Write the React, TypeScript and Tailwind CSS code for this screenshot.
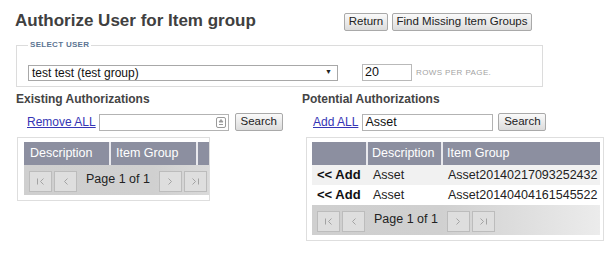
import React from 'react';

const font = { fontFamily: '"Liberation Sans", Arial, sans-serif' };

function Btn({ children, className = '' }: { children: React.ReactNode; className?: string }) {
  return (
    <button
      className={`h-[18px] px-0 whitespace-nowrap border border-[#a9a9a9] rounded-[2px] bg-gradient-to-b from-[#fafafa] to-[#dcdcdc] text-[11.5px] leading-none text-[#222] ${className}`}
    >
      {children}
    </button>
  );
}

function PagerIcon({ kind }: { kind: 'first' | 'prev' | 'next' | 'last' }) {
  return (
    <div className="w-[23px] h-[21px] border border-[#bcbcbc] bg-[#dedede] flex items-center justify-center">
      <svg width="10" height="9" viewBox="0 0 10 9" fill="none" stroke="#a3a3a3" strokeWidth="1">
        {kind === 'first' && <path d="M1.5 1.5v6M7.5 1.5L4.5 4.5l3 3" />}
        {kind === 'prev' && <path d="M6.5 1.5L3.5 4.5l3 3" />}
        {kind === 'next' && <path d="M3.5 1.5l3 3-3 3" />}
        {kind === 'last' && <path d="M2.5 1.5l3 3-3 3M8.5 1.5v6" />}
      </svg>
    </div>
  );
}

function Pager() {
  return (
    <div className="h-[30px] pt-[6px] pl-[5px] flex items-start bg-[linear-gradient(to_right,#cfcfcf_0px,#d0d0d0_130px,#ececec_290px)]">
      <PagerIcon kind="first" />
      <div className="ml-[2px]"><PagerIcon kind="prev" /></div>
      <span className="mx-[9px] mt-[1px] text-[12.5px] leading-[15px] text-[#222]">Page 1 of 1</span>
      <PagerIcon kind="next" />
      <div className="ml-[2px]"><PagerIcon kind="last" /></div>
    </div>
  );
}

export default function App() {
  return (
    <div className="w-[611px] h-[262px] bg-white text-[#333] overflow-hidden" style={font}>
      <div className="flex items-start pl-[15px] pt-[11px]">
        <h1 className="w-[329px] text-[17px] leading-[20px] font-bold text-[#404040]">Authorize User for Item group</h1>
        <div className="flex gap-[4px] mt-[2px]">
          <Btn className="w-[44px]">Return</Btn>
          <Btn className="w-[140px]">Find Missing Item Groups</Btn>
        </div>
      </div>

      <fieldset className="ml-[16px] mt-[9px] w-[527px] border border-[#dcdcdc] px-[11px] pb-[5px]">
        <legend className="px-[2px] text-[8px] leading-[10px] font-bold tracking-[0.3px] text-[#5c7593]">SELECT USER</legend>
        <div className="flex items-center mt-[14px]">
          <div className="w-[310px] h-[16px] border border-[#a8a8a8] flex items-center justify-between pl-[3px] pr-[5px] text-[12px] text-[#111]">
            <span>test test (test group)</span>
            <span className="text-[7px] text-[#222]">▼</span>
          </div>
          <div className="ml-[24px] w-[50px] h-[17px] border border-[#b9b9b9] pl-[2px] text-[12.5px] leading-[15px] text-[#111]">20</div>
          <span className="ml-[4px] text-[8px] tracking-[0.4px] text-[#a3a3a3]">ROWS PER PAGE.</span>
        </div>
      </fieldset>

      <div className="flex mt-[5px]">
        <div className="w-[302px] pl-[16px]">
          <h2 className="text-[12px] leading-[14px] font-bold text-[#444]">Existing Authorizations</h2>
          <div className="flex items-center h-[18px] mt-[7px] pl-[11px]">
            <a className="text-[12px] text-[#3535b5] underline">Remove ALL</a>
            <div className="ml-[3px] w-[130px] h-[17px] border border-[#b3b3b3] flex items-center justify-end pr-[2px]">
              <svg width="10" height="11" viewBox="0 0 10 11" fill="none" stroke="#9a9a9a" strokeWidth="1">
                <rect x="0.5" y="0.5" width="9" height="10" rx="1.5" />
                <path d="M5 2.5L3 5h4z" fill="#9a9a9a" />
                <path d="M3 7.5h4" />
              </svg>
            </div>
            <Btn className="ml-[6px] w-[48px]">Search</Btn>
          </div>
          <div className="mt-[6px] ml-[1px] w-[193px] border border-[#dedede] pt-[4px] pl-[6px] pb-[5px] overflow-hidden">
            <div className="flex h-[23px] bg-[#8c8fa0] text-white text-[12.5px] leading-[23px]">
              <div className="w-[87px] pl-[6px] border-r-2 border-[#e9e9ee]">Description</div>
              <div className="w-[87px] pl-[5px] border-r-2 border-[#e9e9ee]">Item Group</div>
              <div className="flex-1" />
            </div>
            <Pager />
          </div>
        </div>

        <div className="flex-1">
          <h2 className="text-[12px] leading-[14px] font-bold text-[#444]">Potential Authorizations</h2>
          <div className="flex items-center h-[18px] mt-[7px] pl-[11px]">
            <a className="text-[12px] text-[#3535b5] underline">Add ALL</a>
            <div className="ml-[4px] w-[131px] h-[17px] border border-[#b3b3b3] pl-[2px] text-[12.5px] leading-[15px] text-[#111]">Asset</div>
            <Btn className="ml-[5px] w-[48px]">Search</Btn>
          </div>
          <div className="mt-[6px] ml-[4px] w-[298px] border border-[#dedede] pt-[4px] pl-[5px] pr-[3px] pb-[5px]">
            <div className="flex h-[23px] bg-[#8c8fa0] text-white text-[12.5px] leading-[23px]">
              <div className="w-[56px] border-r-2 border-[#e9e9ee]" />
              <div className="w-[75px] pl-[4px] border-r-2 border-[#e9e9ee]">Description</div>
              <div className="flex-1 pl-[4px]">Item Group</div>
            </div>
            {['Asset20140217093252432', 'Asset20140404161545522'].map((g, i) => (
              <div key={g} className={`flex h-[20px] items-center text-[12.5px] text-[#222] ${i === 0 ? 'bg-[#f1f1f1]' : 'bg-white'}`}>
                <div className="w-[56px] pl-[5px] text-[13px] font-bold text-[#111]">&lt;&lt; Add</div>
                <div className="w-[75px] pl-[5px]">Asset</div>
                <div className="flex-1 pl-[5px]">{g}</div>
              </div>
            ))}
            <Pager />
          </div>
        </div>
      </div>
    </div>
  );
}
